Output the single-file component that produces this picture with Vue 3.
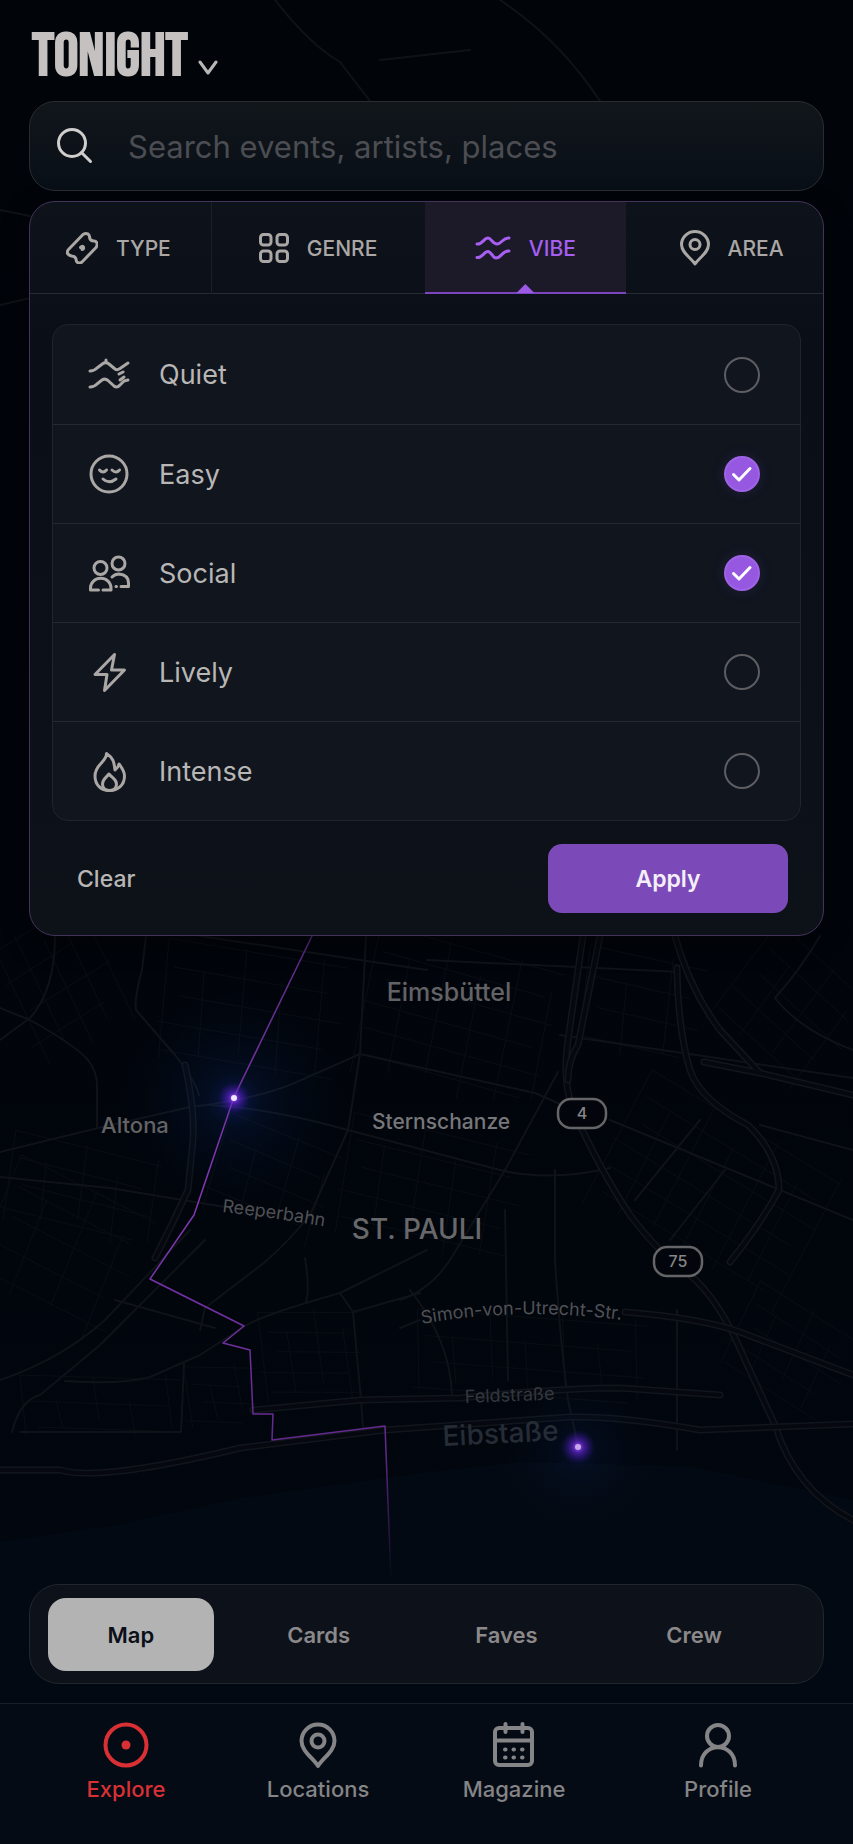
<template>
  <div class="tonight">
    <svg class="city-map" viewBox="0 0 853 1844" preserveAspectRatio="xMidYMid slice" aria-hidden="true">
      <defs>
        <radialGradient id="glow-blue">
          <stop offset="0" stop-color="#2b3cff" stop-opacity="0.5" />
          <stop offset="0.25" stop-color="#0f3a90" stop-opacity="0.25" />
          <stop offset="1" stop-color="#062040" stop-opacity="0" />
        </radialGradient>
        <radialGradient id="glow-violet">
          <stop offset="0" stop-color="#b060ff" />
          <stop offset="0.35" stop-color="#6a25d8" stop-opacity="0.6" />
          <stop offset="1" stop-color="#3a10a0" stop-opacity="0" />
        </radialGradient>
        <linearGradient id="route-fade" gradientUnits="userSpaceOnUse" x1="0" y1="930" x2="0" y2="1580">
          <stop offset="0" stop-color="#5c2a82" />
          <stop offset="0.4" stop-color="#8338b4" />
          <stop offset="0.8" stop-color="#62298c" />
          <stop offset="1" stop-color="#62298c" stop-opacity="0" />
        </linearGradient>
        <path id="reeperbahn" d="M222 1212 Q276 1218 340 1229" />
        <path id="simon" d="M422 1324 Q520 1306 630 1321" />
        <path id="feldstrasse" d="M465 1403 L570 1399" />
        <path id="eibstasse" d="M443 1446 L585 1439" />
      </defs>

      <path class="water" d="M0 1542 L120 1524 L240 1498 L427 1472 L520 1462 L690 1466 L853 1500 V1844 H0Z" />
      <path v-for="(d, i) in streetGrids" :key="'g' + i" class="street" :d="d" />
      <path v-for="(d, i) in roads" :key="'r' + i" class="road" :d="d" />
      <g v-for="(d, i) in highways" :key="'h' + i">
        <path class="highway" :d="d" />
        <path class="highway-core" :d="d" />
      </g>

      <circle cx="234" cy="1100" r="110" fill="url(#glow-blue)" opacity="0.6" />
      <circle cx="578" cy="1450" r="80" fill="url(#glow-blue)" opacity="0.4" />
      <path
        class="route"
        d="M312 936 L234 1097 L194 1215 L150 1279 L244 1326 L223 1343 L250 1350 L253 1414 L273 1414 L272 1440 L385 1426 L391 1580"
      />
      <circle cx="234" cy="1098" r="16" fill="url(#glow-violet)" />
      <circle cx="234" cy="1098" r="3" fill="#f0e6ff" />
      <circle cx="578" cy="1447" r="17" fill="url(#glow-violet)" />
      <circle cx="578" cy="1447" r="3" fill="#c9a6e8" />

      <text
        v-for="p in places"
        :key="p.name"
        class="place"
        :class="'place--' + p.kind"
        :x="p.x"
        :y="p.y"
      >{{ p.name }}</text>
      <text class="street-name"><textPath href="#reeperbahn">Reeperbahn</textPath></text>
      <text class="street-name"><textPath href="#simon">Simon-von-Utrecht-Str.</textPath></text>
      <text class="street-name street-name--dim"><textPath href="#feldstrasse">Feldstraße</textPath></text>
      <text class="street-name street-name--large"><textPath href="#eibstasse">Eibstaße</textPath></text>

      <g v-for="s in shields" :key="s.label">
        <rect class="shield" :x="s.x - 24" :y="s.y - 15" width="48" height="29" rx="13" />
        <text class="shield-label" :x="s.x" :y="s.y + 5">{{ s.label }}</text>
      </g>
    </svg>

    <header class="header">
      <button class="day" type="button">
        <h1 class="day__title">TONIGHT</h1>
        <svg class="day__chevron" width="20" height="16" viewBox="0 0 20 16">
          <path d="M2 2 L10 13 L18 2" />
        </svg>
      </button>
    </header>

    <main class="content">
      <label class="search">
        <svg class="search__icon" width="36" height="36" viewBox="0 0 36 36">
          <circle cx="15" cy="15" r="13.5" />
          <path d="M24.5 24.5 L33.5 33.5" />
        </svg>
        <input v-model="query" type="text" placeholder="Search events, artists, places" aria-label="Search" />
      </label>

      <section class="panel">
        <div class="tabs" role="tablist">
          <button
            v-for="tab in tabs"
            :key="tab.name"
            class="tab"
            :class="{ 'tab--active': tab.name === activeTab }"
            type="button"
            role="tab"
            :aria-selected="tab.name === activeTab"
            @click="activeTab = tab.name"
          >
            <svg class="icon" :width="tab.w" :height="tab.h" :viewBox="`0 0 ${tab.w} ${tab.h}`">
              <path v-for="(d, i) in tab.paths" :key="i" :d="d" />
            </svg>
            <span>{{ tab.name }}</span>
          </button>
        </div>

        <ul class="options">
          <li v-for="o in options" :key="o.name">
            <label class="option">
              <svg class="icon" width="42" height="42" viewBox="0 0 42 42">
                <path v-for="(d, i) in o.paths" :key="i" :d="d" />
              </svg>
              <span class="option__name">{{ o.name }}</span>
              <span class="tick">
                <input v-model="o.checked" type="checkbox" />
                <svg v-if="o.checked" width="36" height="36" viewBox="0 0 36 36">
                  <path d="M9.5 18.5 L15 24 L26 12.5" />
                </svg>
              </span>
            </label>
          </li>
        </ul>

        <div class="actions">
          <button class="clear" type="button" @click="clear">Clear</button>
          <button class="apply" type="button">Apply</button>
        </div>
      </section>
    </main>

    <div class="views">
      <button
        v-for="v in views"
        :key="v"
        class="view"
        :class="{ 'view--active': v === activeView }"
        type="button"
        @click="activeView = v"
      >{{ v }}</button>
    </div>

    <nav class="nav">
      <a
        v-for="item in nav"
        :key="item.name"
        href="#"
        class="nav__item"
        :class="{ 'nav__item--active': item.name === 'Explore' }"
      >
        <svg width="48" height="48" viewBox="0 0 48 48">
          <path v-for="(d, i) in item.paths" :key="i" :d="d" />
          <path v-if="item.solid" class="solid" :d="item.solid" />
        </svg>
        <span>{{ item.name }}</span>
      </a>
    </nav>
  </div>
</template>

<script setup>
import { ref } from 'vue'

const query = ref('')
const activeTab = ref('VIBE')
const activeView = ref('Map')
const views = ['Map', 'Cards', 'Faves', 'Crew']

const circle = (cx, cy, r) => `M${cx - r} ${cy} a${r} ${r} 0 1 0 ${2 * r} 0 a${r} ${r} 0 1 0 ${-2 * r} 0Z`
const square = (x, y, s, r) =>
  `M${x + r} ${y} h${s - 2 * r} a${r} ${r} 0 0 1 ${r} ${r} v${s - 2 * r} a${r} ${r} 0 0 1 ${-r} ${r} h${2 * r - s} a${r} ${r} 0 0 1 ${-r} ${-r} v${2 * r - s} a${r} ${r} 0 0 1 ${r} ${-r}Z`

const tabs = [
  {
    name: 'TYPE', w: 32, h: 32,
    paths: [
      'M17 2.500 Q19.500 1 22 2 Q23.500 3 23.500 5 Q24 9 28 9 Q30 9 31 11 Q31.500 13.500 30 15.500 L16 30 Q14 31.500 11.500 30.500 Q10 29.500 10 27 Q9 24 5.500 24 Q3 23.500 1.500 21.500 Q1 19 2.500 17.500Z',
      'M14.500 15.500 Q16 13.500 17.500 15 Q18 17 16 17.500',
    ],
  },
  {
    name: 'GENRE', w: 30, h: 30,
    paths: [square(1.5, 1.5, 10.5, 3), square(18, 1.5, 10.5, 3), square(1.5, 18, 10.5, 3), square(18, 18, 10.5, 3)],
  },
  {
    name: 'VIBE', w: 36, h: 28,
    paths: [
      'M2 10 C7 11 9 4 13 4 C16 4 18 10 22 10 C27 10 28 3 34 4',
      'M2 23.500 C7 24.500 9 17.500 13 17.500 C16 17.500 18 24 21 24 C26 24 28 16 34 17',
    ],
  },
  {
    name: 'AREA', w: 30, h: 36,
    paths: ['M15 34 C11 28 1.500 22.500 1.500 14.500 A13.500 13 0 0 1 28.500 14.500 C28.500 22.500 19 28 15 34Z', circle(15, 14.5, 5)],
  },
]

const options = ref([
  {
    name: 'Quiet', checked: false,
    paths: [
      'M2 17 Q6 17 9 14 L15 9.500 Q18 7.500 21 10 L27 15 Q29 16.500 32 14.500 L40 9',
      'M2 33 Q6 33 9 30 L14 26 Q17 24 20 26.500 L26 32 Q29 34.500 32 31 L36 27 L40 26',
      'M18 6 v1', 'M31 20 L35 18', 'M32 26 L36 23',
    ],
  },
  {
    name: 'Easy', checked: true,
    paths: [circle(21, 21, 18), 'M11.500 17 Q15 21 18.500 17', 'M24 17 Q28 21 31.500 17', 'M15 26 Q21 31.500 28 26'],
  },
  {
    name: 'Social', checked: true,
    paths: [
      circle(12.5, 16, 6.5), circle(30.5, 11.5, 6.5),
      'M10.500 38 H2.500 V36 A10 9.500 0 0 1 23 36 V38 H15',
      'M24 25 Q27 22 31 22 Q40.500 23 40.500 31 V34.500 H33', 'M28 34.500 h0.500',
    ],
  },
  {
    name: 'Lively', checked: false,
    paths: ['M26.500 3.500 L7 23.500 H19 L16.500 39.500 L36.500 19 H23.500Z'],
  },
  {
    name: 'Intense', checked: false,
    paths: [
      'M18.500 3.500 C19 12 7 14 7 26 C7 35 13 40.500 21.500 40.500 C30 40.500 36.500 35 36.500 26 C36.500 21 34 18 31 14 Q30 18 27 20 C26 15 27 9 18.500 3.500Z',
      'M21 24 C18 28 14.500 29 14.500 34 C14.500 38 17 40.500 21.500 40.500 C26 40.500 28.500 38 28.500 34 C28.500 29 24 28 21 24Z',
    ],
  },
])

const nav = [
  { name: 'Explore', paths: [circle(24, 24, 20.5)], solid: circle(24, 24, 4.5) },
  {
    name: 'Locations',
    paths: ['M24 45 C19 37 7.500 30 7.500 20 A16.500 16.500 0 0 1 40.500 20 C40.500 30 29 37 24 45Z', circle(24, 20, 6.5)],
  },
  {
    name: 'Magazine',
    paths: [
      square(5, 7, 37, 4), 'M6 19.500 H42', 'M15.500 3 V11', 'M32.500 3 V11',
      'M15 28.500 h0.500', 'M23.500 28.500 h0.500', 'M32 28.500 h0.500', 'M15 36.500 h0.500', 'M23.500 36.500 h0.500', 'M32 36.500 h0.500',
    ],
  },
  { name: 'Profile', paths: [circle(24, 15, 11), 'M7 44.500 C7 20 41 20 41 44.500'] },
]

const places = [
  { name: 'Eimsbüttel', x: 449, y: 1001, kind: 'district' },
  { name: 'Altona', x: 135, y: 1133, kind: 'suburb' },
  { name: 'Sternschanze', x: 441, y: 1129, kind: 'quarter' },
  { name: 'ST. PAULI', x: 417, y: 1239, kind: 'city' },
]

const shields = [
  { label: '4', x: 582, y: 1114 },
  { label: '75', x: 678, y: 1262 },
]

const roads = [
  'M146 936 L142 970 Q134 1000 136 1010 L175 1055 Q195 1080 199 1095',
  'M0 1008 L30 1020 Q75 1045 88 1060 Q97 1072 97 1085 V1128',
  'M55 936 Q55 990 30 1018 L0 1040',
  'M0 1152 L98 1128 L190 1107 Q250 1100 290 1085 L360 1054 L535 1093 L560 1104',
  'M366 936 L360 1054 L348 1130 L310 1215 Q290 1240 265 1262 L205 1308',
  'M210 1105 Q270 1108 348 1130 L500 1170 Q550 1182 610 1168',
  'M0 1177 L110 1188 L225 1207',
  'M200 936 L427 970 M427 960 L680 972',
  'M558 1072 L505 1170 L450 1260 Q430 1290 400 1300',
  'M0 1380 Q60 1360 105 1320 L190 1230',
  'M12 1432 Q20 1400 40 1395 L100 1345 L205 1240',
  'M65 1381 Q120 1385 150 1377 L200 1355 L245 1326 Q262 1315 340 1293 L353 1312 L361 1400 L363 1428',
  'M340 1293 L427 1250 M353 1312 L420 1293 M205 1308 L200 1330',
  'M115 1300 L215 1328 M305 1258 Q310 1290 306 1302',
  'M184 1364 L181 1432 L20 1432',
  'M555 1170 V1260 Q560 1340 568 1400 L578 1446',
  'M505 1210 L508 1380 M410 1290 Q450 1340 452 1395',
  'M420 1320 L400 1328 M677 1310 V1450',
  'M820 936 Q800 970 775 998 Q800 1030 853 1050',
  'M560 1035 L853 1078 M610 1120 L853 1220',
  'M700 1120 L635 1200 M760 1125 L853 1150 M725 1170 L670 1240',
]

const outskirts = [
  'M500 0 Q560 40 600 101 M380 60 L470 50',
  'M0 210 L30 216 M0 305 L30 298',
  'M275 0 Q310 45 340 62 L370 101',
]

const highways = [
  'M583 936 Q574 1000 568 1040 Q562 1080 573 1110 Q600 1170 630 1215 Q660 1255 690 1275 Q720 1300 745 1360 L775 1425 Q795 1490 853 1520',
  'M600 936 L578 1045 Q568 1060 568 1080',
  'M675 936 Q690 990 720 1030 L760 1073 L853 1095 M704 1062 L760 1073',
  'M677 968 Q678 1030 690 1070 Q700 1100 748 1125 Q779 1155 779 1190 Q760 1225 730 1262',
  'M625 1312 Q700 1318 740 1332 L853 1375',
  'M253 1410 L361 1400 L460 1398 Q560 1388 620 1388 L720 1395',
  'M0 1470 H60 Q100 1482 240 1448 L385 1430 L570 1417 Q620 1416 700 1430 L853 1424',
  'M185 1065 Q195 1110 193 1140 L188 1190 Q172 1225 155 1258',
]

roads.push(...outskirts)

// Side streets: small rotated lattices, each inside its own block of the city
const blocks = [
  { x: 60, y: 985, w: 130, h: 110, a: 62, step: 24 },
  { x: 250, y: 1010, w: 180, h: 120, a: 8, step: 28 },
  { x: 80, y: 1190, w: 150, h: 90, a: 12, step: 26 },
  { x: 60, y: 1250, w: 150, h: 140, a: 25, step: 30 },
  { x: 270, y: 1180, w: 120, h: 100, a: 20, step: 26 },
  { x: 310, y: 1355, w: 100, h: 90, a: -3, step: 20 },
  { x: 220, y: 1395, w: 70, h: 60, a: -3, step: 18 },
  { x: 455, y: 1020, w: 190, h: 150, a: 14, step: 26 },
  { x: 430, y: 1190, w: 180, h: 120, a: 12, step: 26 },
  { x: 640, y: 1010, w: 120, h: 110, a: 10, step: 30 },
  { x: 710, y: 1190, w: 220, h: 150, a: 30, step: 26 },
  { x: 530, y: 1355, w: 230, h: 80, a: 3, step: 26 },
  { x: 790, y: 1010, w: 130, h: 120, a: 40, step: 26 },
  { x: 790, y: 1350, w: 120, h: 90, a: 30, step: 22 },
  { x: 100, y: 1405, w: 160, h: 60, a: 0, step: 26 },
]

const streetGrids = blocks.map(({ x, y, w, h, a, step }) => {
  const t = (a * Math.PI) / 180
  const at = (u, v) =>
    `${(x + u * Math.cos(t) - v * Math.sin(t)).toFixed(1)} ${(y + u * Math.sin(t) + v * Math.cos(t)).toFixed(1)}`
  let d = ''
  for (let v = -h / 2, k = 0; v <= h / 2; v += step, k++) {
    d += `M${at(-w / 2 + (k % 3) * 9, v)} L${at(w / 2 - (k % 2) * 14, v + 5)} `
  }
  for (let u = -w / 2, k = 0; u <= w / 2; u += step * 1.4, k++) {
    d += `M${at(u, -h / 2 + (k % 2) * step)} L${at(u + 6, h / 2 - (k % 3) * 8)} `
  }
  return d
})

function clear() {
  options.value.forEach((o) => { o.checked = false })
}
</script>

<style>
body {
  margin: 0;
  background: #01050b;
}
</style>

<style scoped>
.tonight {
  position: relative;
  display: flex;
  flex-direction: column;
  min-height: 100vh;
  overflow: hidden;
  background: linear-gradient(#010409, #01050c 70%, #030811);
  color: #b9b7b6;
  font-family: 'Inter', 'Liberation Sans', sans-serif;
}
.tonight * {
  box-sizing: border-box;
}
button {
  border: 0;
  padding: 0;
  background: none;
  color: inherit;
  font: inherit;
  cursor: pointer;
}
svg {
  fill: none;
  stroke: currentColor;
  stroke-width: 3;
  stroke-linecap: round;
  stroke-linejoin: round;
  flex: none;
}

/* map */
.city-map {
  position: absolute;
  inset: 0;
  width: 100%;
  height: 100%;
  stroke: none;
}
.water { fill: #030912; }
.street { stroke: #0a0e14; stroke-width: 1; }
.road { stroke: #0f1318; stroke-width: 2; }
.highway { stroke: #12161c; stroke-width: 7; }
.highway-core { stroke: #05090f; stroke-width: 4; }
.route { stroke: url(#route-fade); stroke-width: 1.5; }
.place {
  fill: #636366;
  font-size: 22px;
  font-weight: 500;
  text-anchor: middle;
}
.place--district { font-size: 25px; }
.place--quarter { fill: #77777a; font-size: 21px; }
.place--city { fill: #68686b; font-size: 28px; }
.street-name { fill: #505155; font-size: 18px; }
.street-name--dim { fill: #34373d; }
.street-name--large { fill: #262c35; font-size: 28px; font-weight: 500; }
.shield { fill: #02060c; stroke: #656467; stroke-width: 2.5; }
.shield-label { fill: #858487; font-size: 16px; font-weight: 500; text-anchor: middle; }

/* header */
.header {
  position: relative;
  display: flex;
  align-items: flex-end;
  height: 101px;
  padding: 0 32px 14px;
}
.day {
  display: flex;
  align-items: flex-end;
  gap: 10px;
}
.day__title {
  margin: 0;
  color: #c4c1c0;
  font-family: 'Bebas Neue', 'Noto Sans ExtraCondensed', 'Open Sans Condensed', 'Roboto Condensed', 'Liberation Sans Narrow', 'Liberation Sans', sans-serif;
  font-size: 61px;
  font-weight: 700;
  line-height: 60px;
}
.day__chevron {
  margin-bottom: 11px;
}

/* search and filter panel */
.content {
  position: relative;
  display: flex;
  flex: 1;
  flex-direction: column;
  gap: 10px;
  padding: 0 29px;
}
.search {
  display: flex;
  align-items: center;
  gap: 35px;
  height: 90px;
  padding: 0 27px;
  border: 1px solid #2b2c33;
  border-radius: 26px;
  background: linear-gradient(#10161a, #090f17);
}
.search__icon {
  color: #d0cecd;
}
.search input {
  flex: 1;
  min-width: 0;
  border: 0;
  padding: 0;
  outline: 0;
  background: none;
  color: #b9b7b6;
  font: inherit;
  font-size: 31px;
}
.search input::placeholder {
  color: #4b4d52;
  opacity: 1;
}
.panel {
  overflow: hidden;
  border: 1px solid #43335a;
  border-radius: 26px;
  background: linear-gradient(#0e131b, #0a0f17 20%, #0d1219);
  box-shadow: 0 8px 24px rgba(0, 0, 0, 0.5);
}
.tabs {
  display: grid;
  grid-template-columns: 182fr 213fr 202fr 197fr;
  height: 92px;
  border-bottom: 1px solid #272b33;
}
.tab {
  position: relative;
  display: flex;
  align-items: center;
  justify-content: center;
  gap: 18px;
  color: #aaa7a5;
  font-size: 21px;
  font-weight: 500;
}
.tab:first-child {
  padding-right: 4px;
  border-right: 1px solid #1b2028;
}
.tab:last-child {
  padding-left: 14px;
}
.tab--active {
  height: 92px;
  background: #1c1928;
  box-shadow: inset 0 -2px #7c45c0;
  color: #a65ff0;
}
.tab--active::after {
  position: absolute;
  bottom: 1px;
  left: 50%;
  width: 18px;
  height: 9px;
  margin-left: -9px;
  background: #9b59e6;
  clip-path: polygon(50% 0, 100% 100%, 0 100%);
  content: '';
}
.options {
  margin: 30px 22px 0;
  padding: 0;
  overflow: hidden;
  border: 1px solid #20252d;
  border-radius: 16px;
  background: #10151e;
  list-style: none;
}
.option {
  display: flex;
  align-items: center;
  gap: 29px;
  height: 99px;
  padding: 0 40px 0 35px;
  color: #aaa7a5;
}
li + li .option {
  border-top: 1px solid #252a32;
}
.option__name {
  flex: 1;
  color: #b9b7b6;
  font-size: 27px;
}
.tick {
  display: grid;
}
.tick > * {
  grid-area: 1 / 1;
}
.tick input {
  width: 36px;
  height: 36px;
  margin: 0;
  border: 2px solid #5d5d62;
  border-radius: 50%;
  appearance: none;
}
.tick input:checked {
  border-color: #9f63e8;
  background: #9658e0;
  box-shadow: 0 0 14px rgba(150, 88, 224, 0.15);
}
.tick svg {
  color: #fff;
  pointer-events: none;
}
.actions {
  display: flex;
  align-items: center;
  justify-content: space-between;
  padding: 23px 35px 22px 47px;
  font-size: 23px;
  font-weight: 500;
}
.apply {
  width: 240px;
  height: 69px;
  border-radius: 14px;
  background: #7c4ab8;
  color: #f4f0f8;
  font-weight: 600;
}

/* view switch */
.views {
  position: relative;
  display: grid;
  grid-template-columns: repeat(4, 1fr);
  height: 100px;
  margin: 0 29px 19px;
  padding: 13px 35px 12px 7px;
  border: 1px solid #22262d;
  border-radius: 30px;
  background: #0d1119;
}
.view {
  margin: 0 11px;
  border-radius: 18px;
  color: #8b898a;
  font-size: 22px;
  font-weight: 600;
}
.view--active {
  background: #b3b3b3;
  color: #0b0f18;
}

/* bottom navigation */
.nav {
  position: relative;
  display: grid;
  grid-template-columns: 192fr 192fr 200fr 208fr;
  height: 141px;
  padding: 17px 31px 0 30px;
  border-top: 1px solid #172029;
  background: #040b14;
}
.nav__item {
  display: flex;
  flex-direction: column;
  align-items: center;
  gap: 6px;
  color: #858486;
  font-size: 22px;
  font-weight: 500;
  line-height: 28px;
  text-decoration: none;
}
.nav__item svg {
  stroke-width: 4;
}
.nav__item .solid {
  fill: currentColor;
  stroke: none;
}
.nav__item--active {
  color: #d93035;
}
</style>
